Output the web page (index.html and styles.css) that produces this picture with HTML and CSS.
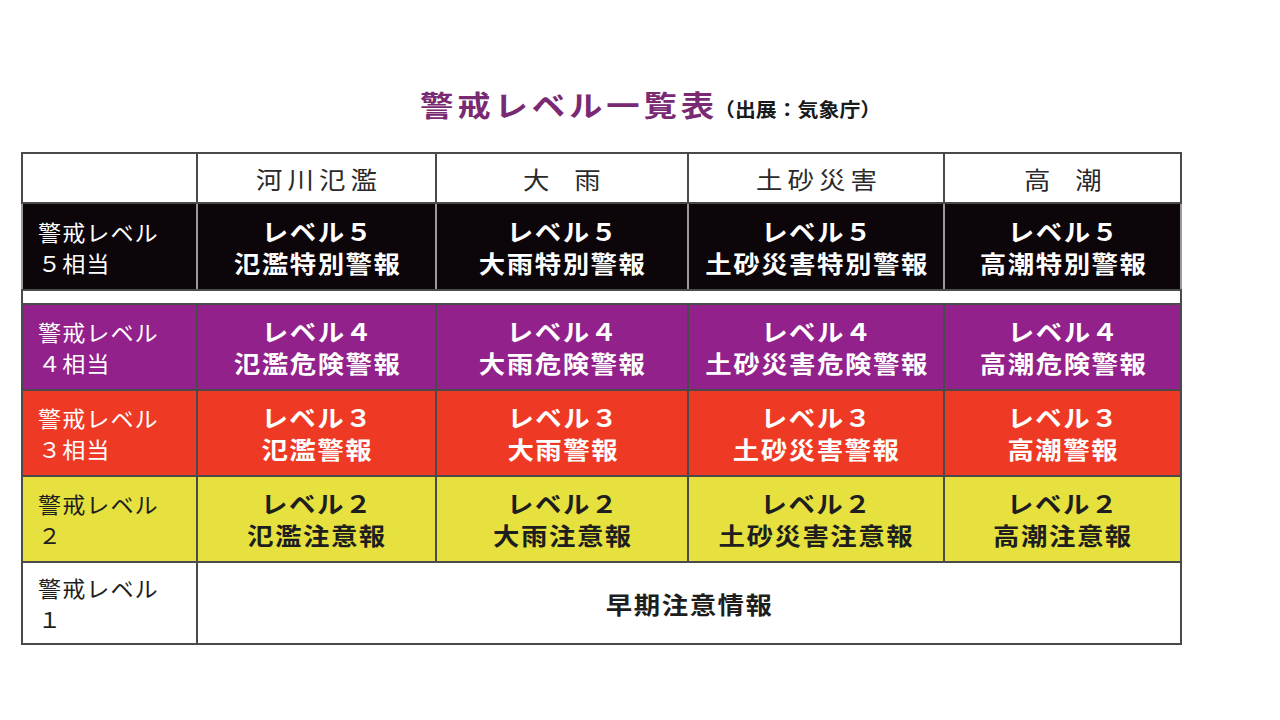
FILE: index.html
```html
<!DOCTYPE html>
<html lang="ja">
<head>
<meta charset="utf-8">
<title>警戒レベル一覧表</title>
<link rel="stylesheet" href="styles.css">
</head>
<body>
<main class="page">
  <h1 class="title"><span class="title-main">警戒レベル一覧表</span><span class="title-sub">（出展：気象庁）</span></h1>
  <table class="levels">
    <colgroup>
      <col class="c0"><col class="c1"><col class="c2"><col class="c3"><col class="c4">
    </colgroup>
    <thead>
      <tr class="head">
        <th></th>
        <th><span class="t">河川氾濫</span></th>
        <th><span class="t">大 雨</span></th>
        <th><span class="t">土砂災害</span></th>
        <th><span class="t">高 潮</span></th>
      </tr>
    </thead>
    <tbody>
      <tr class="row lv5">
        <th class="lab"><span class="t">警戒レベル<br>５相当</span></th>
        <td><span class="t">レベル５<br>氾濫特別警報</span></td>
        <td><span class="t">レベル５<br>大雨特別警報</span></td>
        <td><span class="t">レベル５<br>土砂災害特別警報</span></td>
        <td><span class="t">レベル５<br>高潮特別警報</span></td>
      </tr>
      <tr class="gap"><td colspan="5"></td></tr>
      <tr class="row lv4">
        <th class="lab"><span class="t">警戒レベル<br>４相当</span></th>
        <td><span class="t">レベル４<br>氾濫危険警報</span></td>
        <td><span class="t">レベル４<br>大雨危険警報</span></td>
        <td><span class="t">レベル４<br>土砂災害危険警報</span></td>
        <td><span class="t">レベル４<br>高潮危険警報</span></td>
      </tr>
      <tr class="row lv3">
        <th class="lab"><span class="t">警戒レベル<br>３相当</span></th>
        <td><span class="t">レベル３<br>氾濫警報</span></td>
        <td><span class="t">レベル３<br>大雨警報</span></td>
        <td><span class="t">レベル３<br>土砂災害警報</span></td>
        <td><span class="t">レベル３<br>高潮警報</span></td>
      </tr>
      <tr class="row lv2">
        <th class="lab"><span class="t">警戒レベル<br>２</span></th>
        <td><span class="t">レベル２<br>氾濫注意報</span></td>
        <td><span class="t">レベル２<br>大雨注意報</span></td>
        <td><span class="t">レベル２<br>土砂災害注意報</span></td>
        <td><span class="t">レベル２<br>高潮注意報</span></td>
      </tr>
      <tr class="row lv1">
        <th class="lab"><span class="t">警戒レベル<br>１</span></th>
        <td colspan="4"><span class="t">早期注意情報</span></td>
      </tr>
    </tbody>
  </table>
</main>
</body>
</html>
```

FILE: styles.css
```css
html, body {
  margin: 0;
  padding: 0;
  background: #ffffff;
}

body {
  font-family: "Noto Sans CJK JP", "Noto Sans", sans-serif;
  color: #222222;
  width: 1280px;
  height: 720px;
  overflow: hidden;
}

.page {
  display: flex;
  flex-direction: column;
  align-items: flex-start;
  padding: 82px 0 0 21px;
}

.title {
  margin: 0 0 22px 399px;
  display: flex;
  align-items: baseline;
  font-weight: normal;
  line-height: 44px;
  height: 48px;
}

.title-main {
  display: inline-block;
  font-size: 29px;
  font-weight: 700;
  letter-spacing: 3.4px;
  color: #7a2a73;
  transform: scaleX(1.15);
  transform-origin: left center;
  margin-right: 35px;
}

.title-sub {
  display: inline-block;
  font-size: 19px;
  font-weight: 700;
  letter-spacing: 0;
  color: #1a1a1a;
  transform: scaleX(1.1);
  transform-origin: left center;
}

.levels {
  border-collapse: collapse;
  table-layout: fixed;
  width: 1159px;
}

.c0 { width: 175px; }
.c1 { width: 239px; }
.c2 { width: 252px; }
.c3 { width: 256px; }
.c4 { width: 237px; }

.levels th,
.levels td {
  border: 2px solid #4a4a4a;
  padding: 0;
}

.t {
  display: inline-block;
  transform-origin: center center;
}

.head th {
  height: 48px;
  font-size: 24px;
  font-weight: 400;
  color: #2a2a2a;
  text-align: center;
  vertical-align: middle;
}

.head .t {
  letter-spacing: 4.6px;
  padding-left: 4.6px;
  word-spacing: 8px;
  transform: scaleX(1.1);
}

.row td {
  text-align: center;
  vertical-align: middle;
  font-size: 24px;
  font-weight: 700;
  line-height: 32px;
}

.row td .t {
  letter-spacing: 1.4px;
  padding-left: 1.4px;
  transform: scaleX(1.1);
}

.row .lab {
  text-align: left;
  vertical-align: middle;
  font-size: 22px;
  font-weight: 400;
  line-height: 31px;
  padding-left: 15px;
}

.row .lab .t {
  letter-spacing: 1px;
  transform: scaleX(1.05);
  transform-origin: left center;
}

.lv5 { height: 87px; background: #0c0509; color: #ffffff; }
.lv5 td, .lv5 th { border-left-color: #9a9a9a; border-right-color: #9a9a9a; }
.lv4 { height: 86px; background: #93218b; color: #ffffff; }
.lv3 { height: 86px; background: #ee3a24; color: #ffffff; }
.lv2 { height: 86px; background: #e6e13e; color: #1e1e1e; }
.lv1 { height: 82px; background: #ffffff; color: #1e1e1e; }

.lv1 td {
  padding-top: 2px;
}

.gap td {
  height: 12px;
  background: #ffffff;
}
```
